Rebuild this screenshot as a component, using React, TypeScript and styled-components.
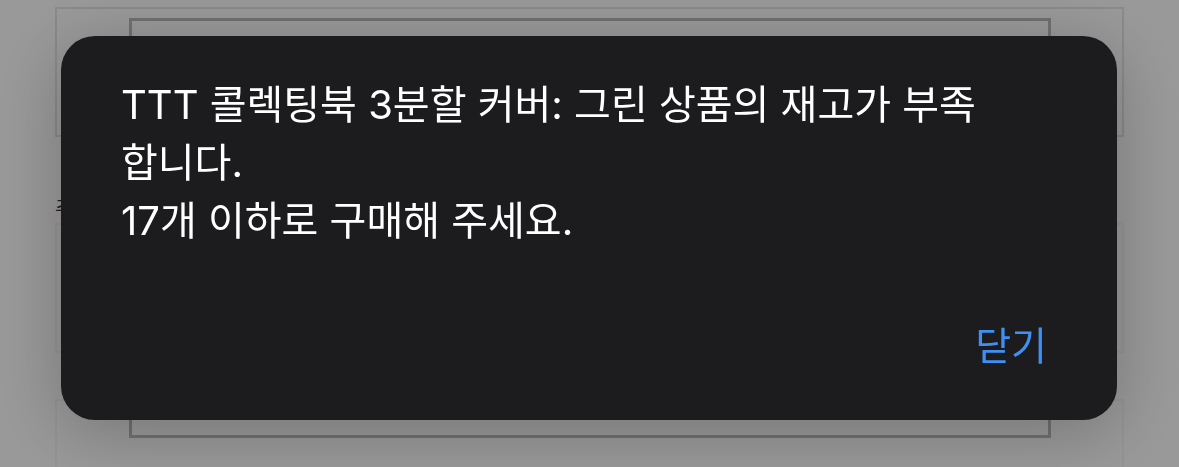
import React from 'react';
import styled, { createGlobalStyle } from 'styled-components';

const GlobalStyle = createGlobalStyle`
    html, body {
        margin: 0;
        padding: 0;
        background: #ffffff;
        font-family: Inter, "Noto Sans CJK KR", sans-serif;
    }
`;

const Page = styled.div`
    position: relative;
    width: 1179px;
    height: 467px;
    overflow: hidden;
    padding: 7px 55px 0;
    box-sizing: border-box;
    display: flex;
    flex-direction: column;
    background: #ffffff;
`;

const Card = styled.div<{ $height: number; $border: string }>`
    height: ${(p) => p.$height}px;
    border: 2px solid ${(p) => p.$border};
    box-sizing: border-box;
    flex-shrink: 0;
`;

const SectionLabel = styled.div`
    margin: 58px 0 0;
    height: 65px;
    font-size: 20px;
    color: #333;
    line-height: 28px;
`;

const Sheet = styled.div`
    position: absolute;
    left: 129px;
    top: 18px;
    width: 922px;
    height: 420px;
    border: 3px solid #bcbcbc;
    box-sizing: border-box;
`;

const Overlay = styled.div`
    position: fixed;
    inset: 0;
    background: rgba(0, 0, 0, 0.4);
    display: flex;
    justify-content: center;
    align-items: flex-start;
    padding: 36px 1px 0 0;
    box-sizing: border-box;
`;

const Dialog = styled.div`
    width: 1056px;
    height: 384px;
    background: #1c1c1e;
    border-radius: 34px;
    box-shadow: 0 12px 70px rgba(0, 0, 0, 0.24);
    display: flex;
    flex-direction: column;
    box-sizing: border-box;
    padding: 40px 70px 46px 60px;
`;

const Message = styled.p`
    margin: 0;
    width: 864px;
    color: #ffffff;
    font-size: 40px;
    line-height: 58px;
    white-space: pre-line;
    word-break: normal;
`;

const Footer = styled.div`
    margin-top: auto;
    display: flex;
    justify-content: flex-end;
`;

const TextButton = styled.button`
    background: none;
    border: none;
    padding: 0;
    color: #3f90f5;
    font-family: Inter, "Noto Sans CJK KR", sans-serif;
    font-size: 39px;
    line-height: 57px;
    cursor: pointer;
`;

export default function App() {
    const message = 'TTT 콜렉팅북 3분할 커버: 그린 상품의 재고가 부족합니다.\n17개 이하로 구매해 주세요.';

    return (
        <>
            <GlobalStyle />
            <Page>
                <Card $height={130} $border="#e6e6e6" />
                <SectionLabel>주문 상품</SectionLabel>
                <Card $height={130} $border="#f6f6f6" />
                <Card $height={120} $border="#f6f6f6" style={{ marginTop: 46 }} />
                <Sheet />
            </Page>
            <Overlay>
                <Dialog role="alertdialog">
                    <Message>{message}</Message>
                    <Footer>
                        <TextButton>닫기</TextButton>
                    </Footer>
                </Dialog>
            </Overlay>
        </>
    );
}
